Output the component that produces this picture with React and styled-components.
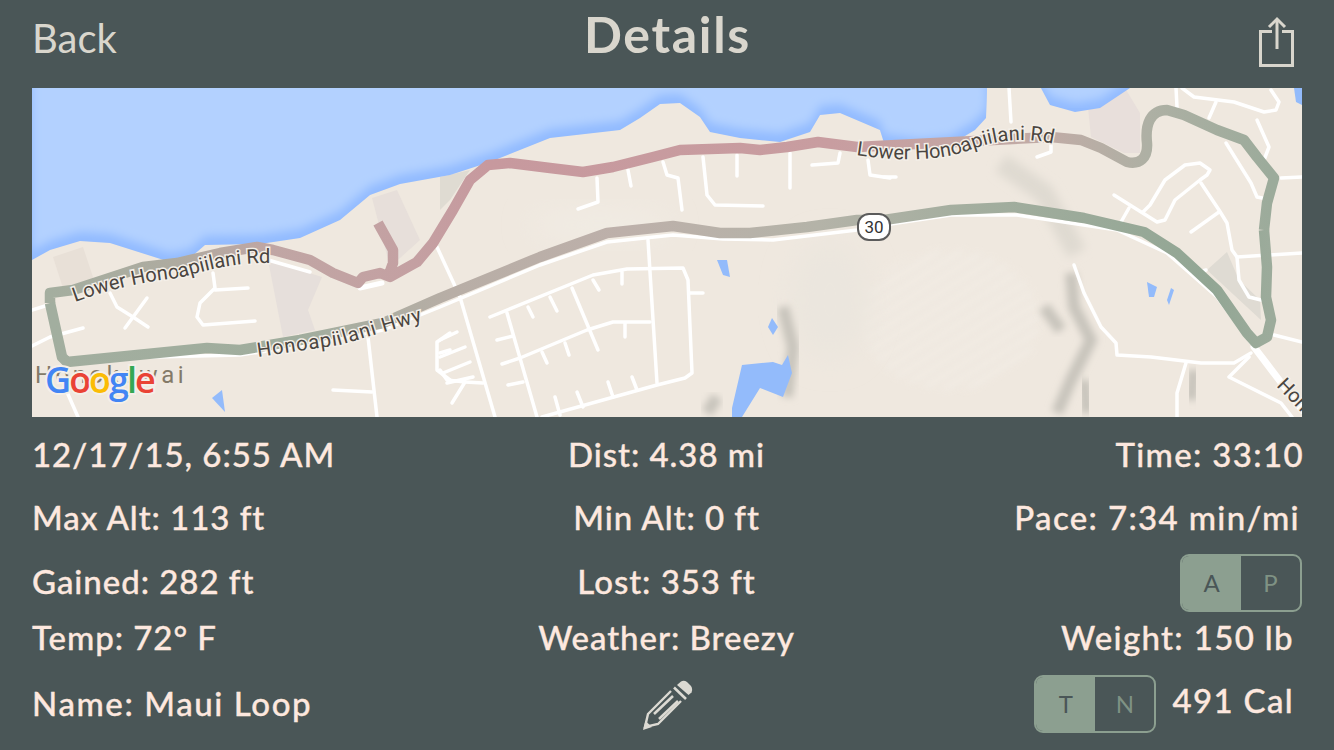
import React from "react";
import styled, { createGlobalStyle } from "styled-components";

const GlobalStyle = createGlobalStyle`
  html, body {
    margin: 0;
    padding: 0;
    background: #4a5657;
  }
`;

const Page = styled.div`
  width: 1334px;
  height: 750px;
  overflow: hidden;
  display: flex;
  flex-direction: column;
  background: #4a5657;
  font-family: Lato, "Open Sans", sans-serif;
`;

const Header = styled.header`
  height: 88px;
  flex: none;
  padding: 0 31px 0 32px;
  display: grid;
  grid-template-columns: 1fr auto 1fr;
  align-items: center;
  color: #d9d6cd;
`;

const Back = styled.div`
  font-size: 40px;
  font-weight: 400;
  line-height: 1;
  margin-bottom: 12px;
`;

const Title = styled.h1`
  margin: 0 0 20px;
  font-size: 50px;
  font-weight: 700;
  line-height: 1;
  letter-spacing: 1.7px;
`;

const ShareButton = styled.div`
  justify-self: end;
  width: 44px;
  height: 56px;
  margin-right: 4px;
  margin-bottom: 2px;
`;

const MapBox = styled.div`
  flex: none;
  height: 329px;
  margin: 0 32px;
  overflow: hidden;
  svg {
    display: block;
  }
`;

const Stats = styled.div`
  flex: 1;
  padding: 0 30px 0 32px;
  color: #fde8df;
  font-size: 33px;
  font-weight: 500;
  line-height: 1;
  -webkit-text-stroke: 0.35px #fde8df;
`;

const Row = styled.div`
  height: ${(p) => p.$h}px;
  display: grid;
  grid-template-columns: 1fr 1fr 1fr;
  align-items: center;
  letter-spacing: ${(p) => p.$track || 0.95}px;
`;

const Left = styled.div`
  white-space: nowrap;
  padding-top: ${(p) => p.$top || 0}px;
`;

const Middle = styled.div`
  justify-self: center;
  white-space: nowrap;
  margin-right: 3px;
`;

const Right = styled.div`
  justify-self: end;
  white-space: nowrap;
  display: flex;
  align-items: center;
  gap: 16px;
  letter-spacing: 1.35px;
  padding-right: ${(p) => p.$pad || 0}px;
  padding-top: ${(p) => p.$top || 0}px;
`;

const Calories = styled.span`
  margin-bottom: 7px;
`;

const Segmented = styled.div`
  width: 122px;
  height: 58px;
  box-sizing: border-box;
  border: 2px solid #8c9f90;
  border-radius: 9px;
  display: flex;
  overflow: hidden;
  -webkit-text-stroke: 0;
  letter-spacing: 0;
`;

const Segment = styled.div`
  flex: 1;
  display: flex;
  align-items: center;
  justify-content: center;
  font-size: 24px;
  font-weight: 400;
  color: ${(p) => (p.$active ? "#4a5657" : "#7f9284")};
  background: ${(p) => (p.$active ? "#8c9f90" : "transparent")};
`;

const PencilIcon = styled.svg`
  display: block;
  width: 90px;
  height: 70px;
  margin: 8px 1px 0 0;
`;

const RoadLabel = styled.text`
  font-family: Roboto, "Liberation Sans", sans-serif;
  font-size: ${(p) => p.$size || 19}px;
  letter-spacing: ${(p) => p.$spacing || 0}px;
  fill: #4a4540;
  stroke: #f4efe8;
  stroke-width: 3px;
  paint-order: stroke;
`;

const GoogleMark = styled.text`
  font-family: "Open Sans", "Liberation Sans", sans-serif;
  font-size: 36px;
  font-weight: 600;
  letter-spacing: -2px;
  stroke: #f4efe8;
  stroke-width: 4px;
  paint-order: stroke;
`;

const roads = [
  "M32 310L45 306",
  "M32 346L50 337L83 328",
  "M110 293L117 307L133 317L148 327",
  "M147 298L125 328",
  "M213 273L215 288L200 303L197 317L203 325L255 321",
  "M215 290L248 288",
  "M67 392L78 417",
  "M368 337L377 417",
  "M333 390L372 392",
  "M437 247L460 297L495 417",
  "M450 333L437 342L437 370L450 380",
  "M440 353L450 350",
  "M268 260L310 272",
  "M67 359L240 355L300 346L383 330L440 307L540 265L607 242L673 235L723 239L773 240L857 230L884 225L951 215L1017 215L1117 230L1167 253L1217 297L1251 343",
  "M648 240L657 383",
  "M490 317L593 275L627 269L683 268L688 280L692 373L685 378L657 385L542 417",
  "M690 293L703 293",
  "M507 313L537 417",
  "M572 288L598 350",
  "M520 358L587 330L613 322L650 322",
  "M528 307L533 317",
  "M550 297L557 311",
  "M593 280L599 290",
  "M622 272L622 284",
  "M625 323L625 337",
  "M565 343L569 355",
  "M542 352L547 363",
  "M497 340L513 336",
  "M502 364L520 358",
  "M508 385L523 382",
  "M555 397L560 415",
  "M577 392L583 407",
  "M608 382L613 397",
  "M632 377L637 390",
  "M440 340L457 332",
  "M440 357L465 347",
  "M440 370L447 380L465 382",
  "M443 373L470 362",
  "M447 383L473 377",
  "M465 382L483 383",
  "M465 382L452 403",
  "M597 178L598 202L578 209",
  "M628 170L631 186",
  "M663 162L667 175L678 178L682 210",
  "M703 157L707 195L715 205L763 206",
  "M737 155L737 176",
  "M790 153L790 188",
  "M840 153L838 163L812 165",
  "M868 160L870 175L890 178",
  "M1037 157L1051 152L1051 140",
  "M884 177L896 177",
  "M1009 88L1011 122",
  "M1114 195L1157 222L1165 220L1175 200L1200 180L1207 175L1210 170L1200 163L1185 165L1165 180L1150 205L1143 212",
  "M1129 208L1121 222",
  "M1201 183L1219 210L1227 223L1232 250L1237 257L1302 253",
  "M1219 212L1191 232",
  "M1237 257L1239 280L1249 297L1261 300",
  "M1226 143L1251 183L1257 197L1267 199",
  "M1281 178L1302 177",
  "M1257 120L1269 147L1264 160",
  "M1176 88L1177 107",
  "M1182 88L1194 97L1234 102L1264 112L1276 110L1279 102L1271 90",
  "M1216 102L1209 118",
  "M1206 270L1199 272",
  "M1074 265L1084 293L1101 327L1116 343L1117 355L1151 357L1201 363L1234 363L1251 353",
  "M1186 363L1177 393L1177 417",
  "M1249 357L1229 377L1281 403L1292 417",
  "M1274 335L1302 342",
];

const hills = [
  "M783 307L793 347L787 397",
  "M1071 273L1074 307L1091 340L1071 380L1057 413",
  "M1084 380L1087 413",
  "M1044 307L1061 330",
  "M1194 370L1191 400",
  "M707 413L717 397",
];

const ponds = [
  "M717 260L727 260L730 277L723 275Z",
  "M772 318L778 327L773 335L768 327Z",
  "M742 365L773 362L782 365L788 355L792 373L783 397L760 388L742 417L732 417L732 408Z",
  "M1147 282L1157 287L1154 297L1149 297Z",
  "M1171 288L1174 290L1169 305L1167 300Z",
  "M222 390L225 412L212 398Z",
  "M1294 88L1302 88L1302 105L1296 102Z",
];

const sea =
  "M32 88L987 88L986 118L975 130L950 145L920 148L884 143L880 130L840 113L820 115L810 132L780 142L740 138L710 132L700 117L680 103L660 104L640 118L620 130L550 138L490 162L450 175L400 184L370 195L340 220L300 238L260 244L205 245L190 258L170 262L110 243L80 241L50 250L32 260Z";
const bay = "M1041 88L1130 88L1115 98L1100 108L1075 112L1050 105Z";

const topRoute =
  "M378 223L393 250L393 263L388 277M50 303L50 293L73 290L143 267L177 263L220 253L257 247L273 250L310 260L333 273L358 283L363 277L380 273L390 277L417 262L433 243L453 210L470 180L488 165L510 163L550 168L583 172L613 167L653 157L680 150L740 148L760 150L787 147L818 142L857 147L1051 137L1081 140L1101 148L1127 162C1140 165 1148 158 1147 143C1145 125 1150 110 1167 110L1184 115L1217 130L1244 140L1257 157L1274 178L1267 203L1264 230";
const bottomRoute =
  "M1264 230L1267 267L1266 297L1271 320L1267 337L1256 343L1247 333L1217 290L1177 253L1144 232L1084 218L1014 207L951 210L884 220L857 220L807 227L750 233L720 233L673 226L607 233L540 257L440 298L383 323L300 340L240 350L207 348L67 362L62 357L50 303";

const TrackMap = () => (
  <svg width="1270" height="329" viewBox="32 88 1270 329">
    <defs>
      <filter id="soft" x="-20%" y="-20%" width="140%" height="140%">
        <feGaussianBlur stdDeviation="5" />
      </filter>
      <filter id="wide" x="-40%" y="-40%" width="180%" height="180%">
        <feGaussianBlur stdDeviation="14" />
      </filter>
      <filter id="softer" x="-60%" y="-30%" width="220%" height="160%">
        <feGaussianBlur stdDeviation="3.500" />
      </filter>
      <pattern id="terrain" width="12" height="12" patternUnits="userSpaceOnUse" patternTransform="rotate(58)">
        <rect width="5" height="12" fill="#f4f0ea" />
      </pattern>
      <clipPath id="seaClip">
        <path d={sea} />
        <path d={bay} />
      </clipPath>
      <linearGradient id="topGrad" gradientUnits="userSpaceOnUse" x1="50" y1="0" x2="1270" y2="0">
        <stop offset="0" stopColor="#a4ae9f" />
        <stop offset="0.1" stopColor="#aeaba0" />
        <stop offset="0.18" stopColor="#c0a6a4" />
        <stop offset="0.3" stopColor="#c4a0a2" />
        <stop offset="0.36" stopColor="#c7999e" />
        <stop offset="0.64" stopColor="#c89da0" />
        <stop offset="0.82" stopColor="#c0aca6" />
        <stop offset="0.9" stopColor="#aeb0a4" />
        <stop offset="1" stopColor="#9cab9b" />
      </linearGradient>
      <linearGradient id="bottomGrad" gradientUnits="userSpaceOnUse" x1="50" y1="0" x2="1270" y2="0">
        <stop offset="0" stopColor="#a2ae9f" />
        <stop offset="0.2" stopColor="#a0ad9d" />
        <stop offset="0.33" stopColor="#b8aea6" />
        <stop offset="0.47" stopColor="#bdb0aa" />
        <stop offset="0.63" stopColor="#b4b3a8" />
        <stop offset="0.75" stopColor="#a4ae9f" />
        <stop offset="0.95" stopColor="#92a694" />
        <stop offset="1" stopColor="#9cab9b" />
      </linearGradient>
    </defs>

    <rect x="32" y="88" width="1270" height="329" fill="#efe8df" />

    <ellipse cx="950" cy="320" rx="90" ry="70" fill="url(#terrain)" opacity="0.55" filter="url(#softer)" />
    <ellipse cx="600" cy="225" rx="70" ry="14" fill="#f1ece4" filter="url(#wide)" />
    <ellipse cx="830" cy="300" rx="40" ry="60" fill="#ebe6de" filter="url(#wide)" />

    <path d="M268 260L322 277L308 310L315 330L283 337Z" fill="#e6dfdb" />
    <path d="M53 257L83 247L95 283L63 288Z" fill="#e8e0d7" />
    <path d="M372 198L397 190L420 240L390 267Z" fill="#e7dfda" />
    <path d="M440 177L470 170L450 200L440 210Z" fill="#dfdbd2" />
    <path d="M1086 88L1125 88L1140 113L1140 153L1124 153L1091 137Z" fill="#e8dfdb" />
    <path d="M1227 252L1207 270L1261 320L1260 300L1239 280Z" fill="#dfdbd3" />

    {hills.map((d) => (
      <path key={d} d={d} fill="none" stroke="#c8c4bc" strokeWidth="12" filter="url(#softer)" />
    ))}
    <path d="M1001 163L1044 193L1077 253" fill="none" stroke="#dfdad1" strokeWidth="20" filter="url(#soft)" />

    <path d={sea} fill="#92bbff" />
    <path d={bay} fill="#92bbff" />
    <g clipPath="url(#seaClip)">
      <path d={sea} fill="#b3d1ff" transform="translate(0 -9)" filter="url(#soft)" />
      <path d={bay} fill="#b3d1ff" transform="translate(0 -9)" filter="url(#soft)" />
    </g>
    {ponds.map((d) => (
      <path key={d} d={d} fill="#93bbfb" />
    ))}

    <g fill="none" stroke="#fff" strokeWidth="3.500" strokeLinejoin="round" strokeLinecap="round">
      {roads.map((d) => (
        <path key={d} d={d} />
      ))}
      <path d="M1254 347L1302 410" strokeWidth="7" />
      <path d="M360 288L382 283" strokeWidth="5" />
    </g>

    <g fill="none" strokeWidth="10.500" strokeLinejoin="round" strokeLinecap="butt">
      <path d={topRoute} stroke="url(#topGrad)" />
      <path d={bottomRoute} stroke="url(#bottomGrad)" />
    </g>

    <path id="lowerWest" d="M75 302Q130 282 180 278Q230 262 270 263" fill="none" />
    <path id="lowerEast" d="M856 155Q920 165 965 152Q1010 133 1054 144" fill="none" />
    <path id="hwy" d="M258 357L340 345L425 320" fill="none" />
    <RoadLabel $size={20}>
      <textPath href="#lowerWest">Lower Honoapiilani Rd</textPath>
    </RoadLabel>
    <RoadLabel $size={20}>
      <textPath href="#lowerEast">Lower Honoapiilani Rd</textPath>
    </RoadLabel>
    <RoadLabel $size={20} $spacing={0.9}>
      <textPath href="#hwy">Honoapiilani Hwy</textPath>
    </RoadLabel>
    <RoadLabel $size={20} transform="translate(1276 386) rotate(46)">
      Hon
    </RoadLabel>

    <rect x="858" y="214" width="32" height="26" rx="11" fill="#fff" stroke="#5b5b5b" strokeWidth="2" />
    <text x="874" y="233" textAnchor="middle" fontFamily="Roboto, sans-serif" fontSize="17" fill="#333">
      30
    </text>

    <text x="35" y="383" fontFamily="Roboto, sans-serif" fontSize="24" letterSpacing="3.500" fill="#847a68">
      Honokowai
    </text>
    <GoogleMark x="45" y="393">
      <tspan fill="#4285f4">G</tspan>
      <tspan fill="#ea4335">o</tspan>
      <tspan fill="#fbbc05">o</tspan>
      <tspan fill="#4285f4">g</tspan>
      <tspan fill="#34a853">l</tspan>
      <tspan fill="#ea4335">e</tspan>
    </GoogleMark>
  </svg>
);

const ShareIcon = () => (
  <svg width="44" height="56" viewBox="1255 14 44 56" fill="none" stroke="#d9d6cd" strokeWidth="3">
    <path d="M1272 30.500H1260.500V64.500H1292.500V30.500H1282" />
    <path d="M1277 48V19" />
    <path d="M1269 26L1277 18L1285 26" />
  </svg>
);

const Pencil = () => (
  <PencilIcon viewBox="0 0 90 70">
    <g fill="none" stroke="#dcdad3" strokeWidth="2.400">
      <path d="M50 21L27 44L24 57L37 54L60 31" />
      <path d="M33 44L52 26" strokeWidth="2.600" />
      <path d="M38 49L57 31" strokeWidth="2.600" />
    </g>
    <path d="M22 60L24.500 51L31 57Z" fill="#dcdad3" />
    <path d="M53 17.500L65 29" fill="none" stroke="#dcdad3" strokeWidth="2.600" />
    <path
      d="M56 15L60 11.500Q63 10 66 12L70 16Q72 19 70.500 22.500L67.500 25Z"
      fill="#dcdad3"
    />
  </PencilIcon>
);

export default function App() {
  return (
    <Page>
      <GlobalStyle />
      <Header>
        <Back>Back</Back>
        <Title>Details</Title>
        <ShareButton>
          <ShareIcon />
        </ShareButton>
      </Header>
      <MapBox>
        <TrackMap />
      </MapBox>
      <Stats>
        <Row $h={75}>
          <Left>12/17/15, 6:55 AM</Left>
          <Middle>Dist: 4.38 mi</Middle>
          <Right>Time: 33:10</Right>
        </Row>
        <Row $h={50}>
          <Left>Max Alt: 113 ft</Left>
          <Middle>Min Alt: 0 ft</Middle>
          <Right $pad={4}>Pace: 7:34 min/mi</Right>
        </Row>
        <Row $h={78}>
          <Left>Gained: 282 ft</Left>
          <Middle>Lost: 353 ft</Middle>
          <Right $pad={2} $top={4}>
            <Segmented>
              <Segment $active>A</Segment>
              <Segment>P</Segment>
            </Segmented>
          </Right>
        </Row>
        <Row $h={34}>
          <Left>Temp: 72° F</Left>
          <Middle>Weather: Breezy</Middle>
          <Right $pad={10}>Weight: 150 lb</Right>
        </Row>
        <Row $h={93} $track={1.6}>
          <Left $top={5}>Name: Maui Loop</Left>
          <Middle>
            <Pencil />
          </Middle>
          <Right $pad={10} $top={7}>
            <Segmented>
              <Segment $active>T</Segment>
              <Segment>N</Segment>
            </Segmented>
            <Calories>491 Cal</Calories>
          </Right>
        </Row>
      </Stats>
    </Page>
  );
}
